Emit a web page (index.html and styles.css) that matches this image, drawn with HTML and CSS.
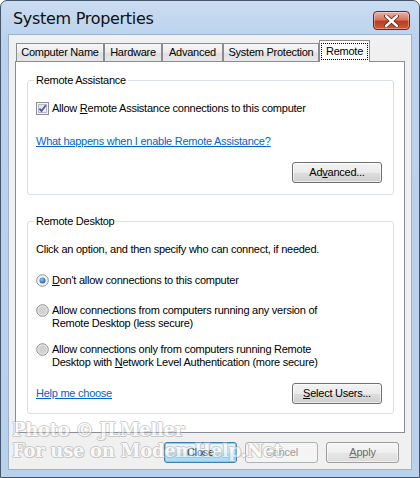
FILE: index.html
```html
<!DOCTYPE html>
<html>
	<head>
		<meta charset="utf-8">
		<title>System Properties</title>
		<link rel="stylesheet" href="styles.css">
	</head>
	<body>
		<div class="window">
			<div class="titlebar">
				<span class="title">System Properties</span>
				<span class="close-x">
					<svg width="15" height="12" viewBox="0 0 15 12">
						<path d="M2 1 L13 11 M13 1 L2 11" stroke="#5a1c10" stroke-width="4" stroke-linecap="round"/>
						<path d="M2 1 L13 11 M13 1 L2 11" stroke="#ffffff" stroke-width="2.4" stroke-linecap="round"/>
					</svg>
				</span>
			</div>

			<div class="client">
				<div class="tabs">
					<span class="tab tab-name">Computer Name</span>
					<span class="tab tab-hw">Hardware</span>
					<span class="tab tab-adv">Advanced</span>
					<span class="tab tab-prot">System Protection</span>
					<span class="tab tab-remote active"><span class="focus">Remote</span></span>
				</div>

				<div class="panel">
					<!-- 远程协助 -->
					<fieldset class="group group-assist">
						<legend>Remote Assistance</legend>
						<div class="option">
							<svg class="checkbox" width="13" height="13" viewBox="0 0 13 13">
								<defs>
									<linearGradient id="cbfill" x1="0" y1="0" x2="1" y2="1">
										<stop offset="0" stop-color="#d9dcef"/>
										<stop offset="1" stop-color="#f7f8ff"/>
									</linearGradient>
								</defs>
								<rect x="0.5" y="0.5" width="12" height="12" fill="#f4f4f4" stroke="#8f8f8f"/>
								<rect x="2.5" y="2.5" width="8" height="8" fill="url(#cbfill)" stroke="#b6bac8"/>
								<path d="M3.4 6.6 L5.5 9 L9.8 3.2" fill="none" stroke="#4d5fa6" stroke-width="1.8"/>
							</svg>
							<span>Allow <u>R</u>emote Assistance connections to this computer</span>
						</div>
						<a class="link link-what" href="#">What happens when I enable Remote Assistance?</a>
						<div class="btn-row">
							<span class="btn btn-wide">Ad<u>v</u>anced...</span>
						</div>
					</fieldset>

					<!-- 远程桌面 -->
					<fieldset class="group group-desktop">
						<legend>Remote Desktop</legend>
						<div class="intro">Click an option, and then specify who can connect, if needed.</div>
						<div class="option radio-row radio-first">
							<svg class="radio" width="13" height="13" viewBox="0 0 13 13">
								<defs>
									<radialGradient id="rdon" cx="0.4" cy="0.35" r="0.7">
										<stop offset="0" stop-color="#8fc6f4"/>
										<stop offset="1" stop-color="#1d5798"/>
									</radialGradient>
								</defs>
								<circle cx="6.5" cy="6.5" r="5.8" fill="#f1f1f1" stroke="#8c8f94"/>
								<circle cx="6.5" cy="6.5" r="3" fill="url(#rdon)"/>
							</svg>
							<span><u>D</u>on't allow connections to this computer</span>
						</div>
						<div class="option radio-row radio-second">
							<svg class="radio" width="13" height="13" viewBox="0 0 13 13">
								<circle cx="6.5" cy="6.5" r="5.8" fill="#e6e6e6" stroke="#8c8f94"/>
								<circle cx="6.5" cy="6.5" r="4" fill="#d2d2d2"/>
							</svg>
							<span>Allow connections from computers running any version of<br>Remote Desktop (less secure)</span>
						</div>
						<div class="option radio-row radio-third">
							<svg class="radio" width="13" height="13" viewBox="0 0 13 13">
								<circle cx="6.5" cy="6.5" r="5.8" fill="#e6e6e6" stroke="#8c8f94"/>
								<circle cx="6.5" cy="6.5" r="4" fill="#d2d2d2"/>
							</svg>
							<span>Allow connections only from computers running Remote<br>Desktop with <u>N</u>etwork Level Authentication (more secure)</span>
						</div>
						<div class="btn-row help-row">
							<a class="link" href="#">Help me choose</a>
							<span class="btn btn-wide"><u>S</u>elect Users...</span>
						</div>
					</fieldset>
				</div>

				<div class="dialog-buttons">
					<span class="btn btn-default">Close</span>
					<span class="btn btn-disabled">Cancel</span>
					<span class="btn btn-apply"><u>A</u>pply</span>
				</div>
			</div>

			<!-- 水印 -->
			<div class="watermark">
				<div>Photo © JLMeller</div>
				<div>For use on ModemHelp.Net</div>
			</div>
		</div>
	</body>
</html>
```

FILE: styles.css
```css
body{
	margin: 0;
	background-color: #ffffff;
	font-family: "Liberation Sans", Arial, sans-serif;
	font-size: 11px;
	letter-spacing: -0.25px;
	color: #000;
}

/* 窗口外框 */
.window{
	position: relative;
	width: 420px;
	height: 478px;
	box-sizing: border-box;
	border: 1px solid #44546a;
	border-radius: 7px 7px 0 0;
	padding: 0 7px 7px 7px;
	background: linear-gradient(#c9dcf1, #bad2ed 40px, #b9d1ea);
	overflow: hidden;
}

/* 标题栏 */
.titlebar{
	display: flex;
	justify-content: space-between;
	height: 33px;
}
.title{
	font-family: "DejaVu Sans", sans-serif;
	font-size: 16px;
	letter-spacing: -0.3px;
	padding: 8px 0 0 5px;
	color: #101010;
}
.close-x{
	display: flex;
	align-items: center;
	justify-content: center;
	width: 37px;
	height: 19px;
	box-sizing: border-box;
	margin: 10px 2px 0 0;
	border: 1px solid #6d2417;
	border-radius: 4px;
	background: linear-gradient(#eab1a6, #d9775f 45%, #c2391b 55%, #cf5b3c);
	box-shadow: inset 0 0 0 1px rgba(255,255,255,0.35);
}

/* 客户区 */
.client{
	height: 436px;
	box-sizing: border-box;
	border: 1px solid #9cb2cc;
	background-color: #f0f0f0;
	padding: 5px 6px 0 6px;
}

/* 选项卡 */
.tabs{
	display: flex;
	align-items: flex-end;
	height: 21px;
	padding-left: 1px;
}
.tab{
	box-sizing: border-box;
	height: 18px;
	line-height: 16px;
	text-align: center;
	border: 1px solid #898c95;
	border-bottom: none;
	background: linear-gradient(#f6f6f6, #ececec 50%, #dedede 51%, #e8e8e8);
}
.tab-name{ width: 88px; }
.tab-hw{ width: 58px; }
.tab-adv{ width: 61px; }
.tab-prot{ width: 96px; }
.tab.active{
	position: relative;
	width: 51px;
	height: 22px;
	margin-bottom: -1px;
	padding-top: 2px;
	background: #ffffff;
}
.focus{
	display: block;
	margin: 0 1px;
	height: 15px;
	line-height: 14px;
	border: 1px dotted #000;
}

/* 面板 */
.panel{
	height: 372px;
	box-sizing: border-box;
	border: 1px solid #898c95;
	background-color: #ffffff;
	padding: 11px 10px 0 11px;
}

/* 分组框 */
.group{
	margin: 0;
	border: 1px solid #d5dfe5;
	border-radius: 3px;
	padding: 15px 11px 11px 8px;
	line-height: 13px;
}
.group legend{
	padding: 0 2px;
	margin-left: -2px;
	line-height: 14px;
}
.group-desktop{
	margin-top: 19px;
	padding-bottom: 9px;
}

.option{
	display: flex;
	align-items: center;
	gap: 3px;
}
.radio-row{
	align-items: flex-start;
}
.radio-first{ margin-top: 18px; }
.radio-second{ margin-top: 17px; }
.radio-third{ margin-top: 13px; }

.link{
	display: block;
	color: #0066cc;
}
.link-what{
	margin-top: 20px;
}

.btn-row{
	display: flex;
	justify-content: flex-end;
	align-items: center;
	margin-top: 14px;
}
.help-row{
	justify-content: space-between;
}

/* 按钮 */
.btn{
	display: block;
	box-sizing: border-box;
	height: 21px;
	line-height: 19px;
	text-align: center;
	border: 1px solid #707070;
	border-radius: 3px;
	background: linear-gradient(#f2f2f2, #ebebeb 50%, #dddddd 51%, #cfcfcf);
	box-shadow: inset 0 0 0 1px rgba(255,255,255,0.6);
}
.btn-wide{ width: 90px; }

.dialog-buttons{
	display: flex;
	justify-content: flex-end;
	gap: 8px;
	margin: 9px 6px 0 0;
}
.dialog-buttons .btn{ width: 73px; }
.btn-default{
	border-color: #3c7fb1;
	background: linear-gradient(#eaf6fd, #d9f0fc 50%, #bee6fd 51%, #a7d9f5);
	box-shadow: inset 0 0 0 1px #7fd0f5;
}
.btn-disabled{
	border-color: #adb2b5;
	background: #f4f4f4;
	color: #9a9a9a;
	box-shadow: none;
}
.btn-apply{
	color: #6d6d6d;
	border-color: #9c9c9c;
	background: linear-gradient(#f6f6f6, #efefef 50%, #e6e6e6 51%, #dcdcdc);
}

/* 水印 */
.watermark{
	position: absolute;
	left: 11px;
	top: 418px;
	font-family: "DejaVu Serif", serif;
	font-weight: 700;
	font-size: 18px;
	letter-spacing: -0.3px;
	line-height: 21px;
	color: #ffffff;
	text-shadow: 1px 0 #a8a8a8, -1px 0 #a8a8a8, 0 1px #a8a8a8, 0 -1px #a8a8a8, 1px 1px #bdbdbd;
	opacity: 0.55;
	pointer-events: none;
}
```
